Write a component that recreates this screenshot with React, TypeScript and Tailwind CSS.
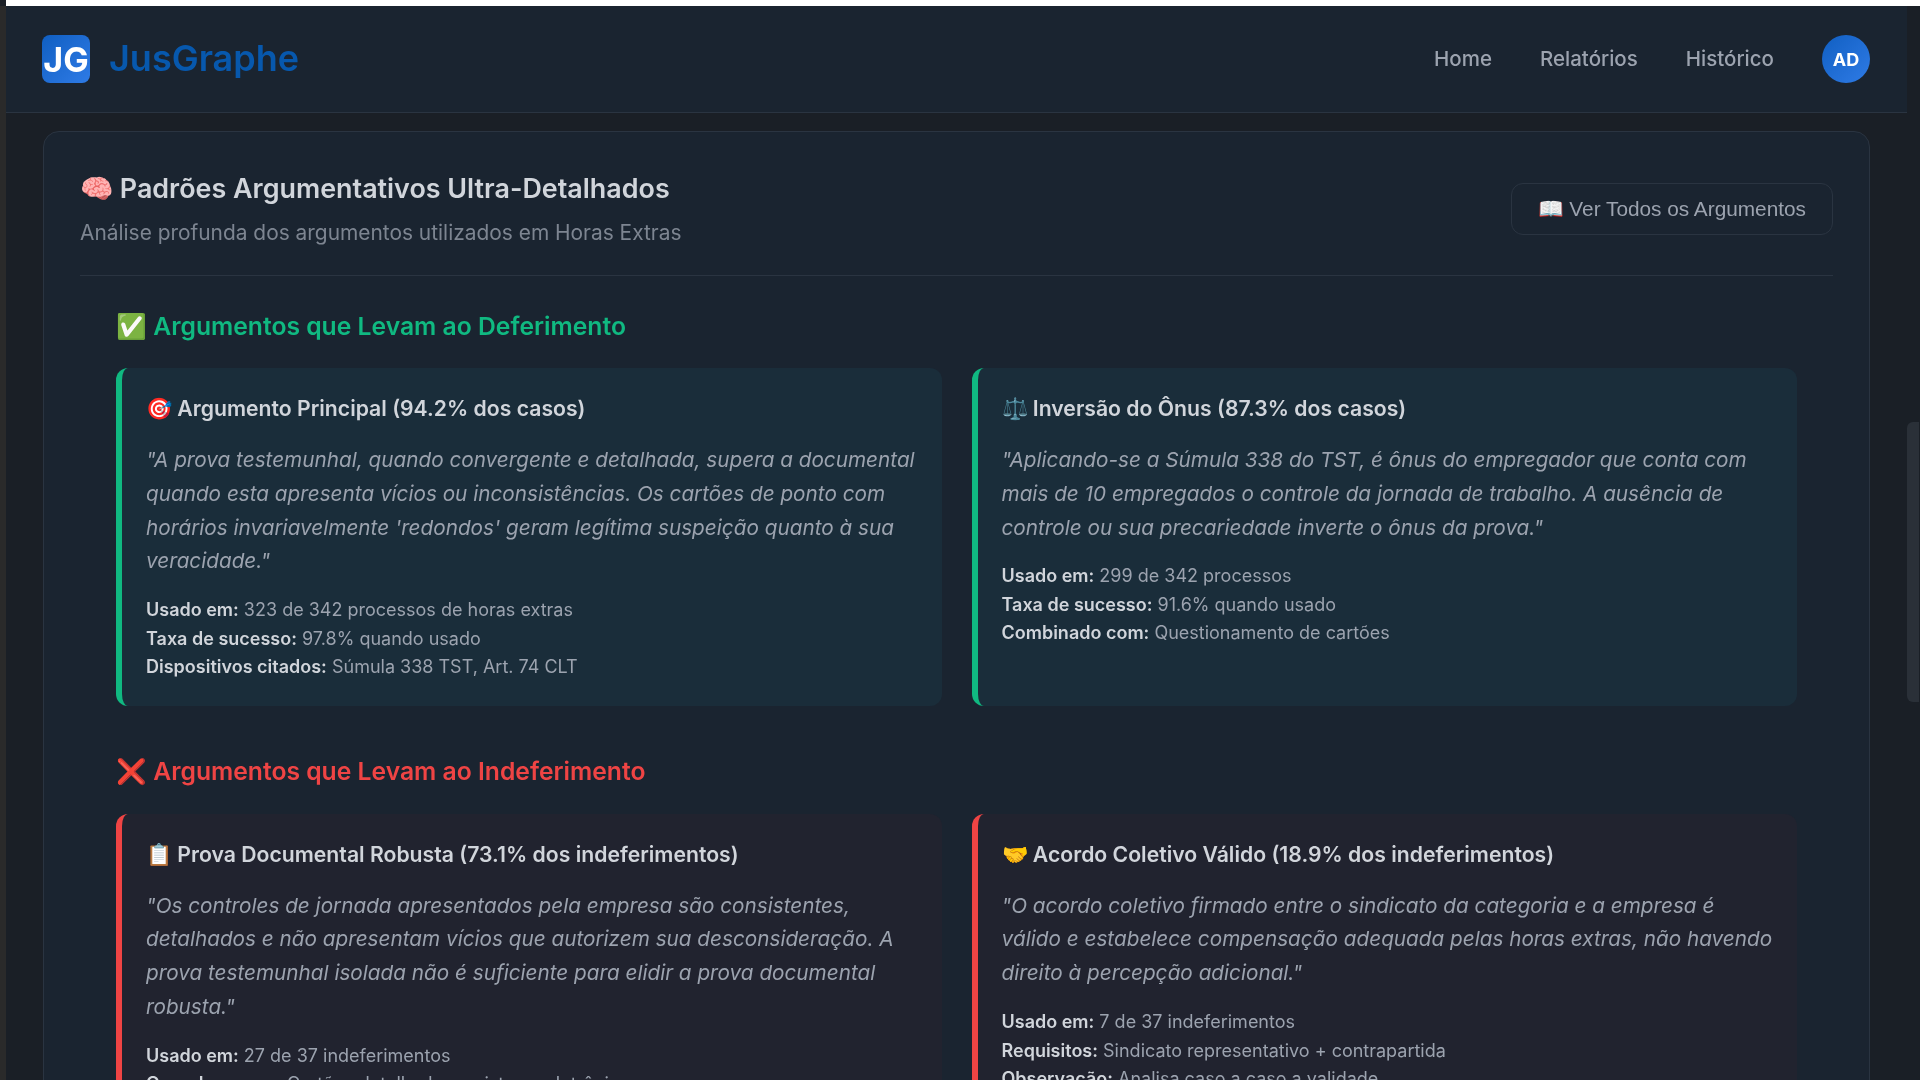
const FONT = "font-['Inter','Noto_Sans',sans-serif]";

interface ArgumentProps {
  icon: string;
  title: string;
  quote: string;
  stats: [string, string][];
  tone: "green" | "red";
}

const ArgumentCard = ({ icon, title, quote, stats, tone }: ArgumentProps) => {
  return (
    <div
      className={`rounded-xl border-l-[6px] pt-[20px] pb-[24px] pl-[24px] pr-[24px] ${
        tone === "green" ? "border-[#10b981] bg-[#1a2d3a]" : "border-[#ef4444] bg-[#21232f]"
      }`}
    >
      <h4 className="text-[21.2px] leading-[40px] font-semibold text-[#d1d5db]">
        {icon} {title}
      </h4>
      <p className="mt-[15px] text-[20.73px] leading-[33.8px] italic text-[#9ca3af]">{quote}</p>
      <div className="mt-[18px] text-[18px] leading-[28.5px] text-[#9ca3af]">
        {stats.map(([label, value]) => (
          <div key={label}>
            <strong className="font-semibold text-[#d1d5db]">{label}</strong> {value}
          </div>
        ))}
      </div>
    </div>
  );
};

export default function App() {
  return (
    <div className={`relative flex h-[1080px] flex-col overflow-hidden bg-[#1a1f26] blur-[0.6px] ${FONT}`}>
      {/* faixa branca do topo */}
      <div className="ml-[6px] h-[6px] shrink-0 bg-white" />
      <div className="flex min-h-0 flex-1">
        <div className="w-[6px] shrink-0 bg-[#2a2a2a]" />
        <div className="min-w-0 flex-1">
          <header className="flex h-[107px] items-center justify-between border-b border-[#2a3441] bg-[#1a2430] pr-[37px] pl-[36px]">
            <div className="flex items-center gap-[19px]">
              <div className="flex h-[48px] w-[48px] items-center justify-center rounded-lg bg-gradient-to-br from-[#0f5fc2] to-[#2e7be6] text-[34px] font-bold text-white">
                JG
              </div>
              <span className="pb-[2px] text-[36px] font-semibold text-[#0758ad]">JusGraphe</span>
            </div>
            <nav className="flex items-center gap-[48px] text-[20.5px] font-medium text-[#9ca3af]">
              <span>Home</span>
              <span>Relatórios</span>
              <span>Histórico</span>
              <div className="flex h-[48px] w-[48px] items-center justify-center rounded-full bg-gradient-to-br from-[#0f5fc2] to-[#2e7be6] text-[18px] font-bold text-white">
                AD
              </div>
            </nav>
          </header>
          <main className="px-[37px] pt-[18px]">
            <section className="rounded-2xl border border-[#2a3441] bg-[#1a2430] px-[36px] pt-[36px]">
              <div className="flex items-start justify-between border-b border-[#2a3441] pb-[26px]">
                <div>
                  <h2 className="text-[26.9px] leading-[40px] font-semibold text-[#d1d5db]">
                    🧠 Padrões Argumentativos Ultra-Detalhados
                  </h2>
                  <p className="mt-[9px] text-[20.9px] leading-[32px] text-[#7d8591]">
                    Análise profunda dos argumentos utilizados em Horas Extras
                  </p>
                </div>
                <button className="mt-[15px] h-[52px] rounded-xl border border-[#2a3441] px-[26px] font-['Liberation_Sans',sans-serif] text-[20.8px] text-[#9ca3af]">
                  📖 Ver Todos os Argumentos
                </button>
              </div>
              <div className="px-[36px] pt-[32px]">
                <h3 className="text-[24.7px] leading-[36px] font-semibold text-[#10b981]">
                  ✅ Argumentos que Levam ao Deferimento
                </h3>
                <div className="mt-[24px] grid grid-cols-2 gap-[30px]">
                  <ArgumentCard
                    tone="green"
                    icon="🎯"
                    title="Argumento Principal (94.2% dos casos)"
                    quote={`"A prova testemunhal, quando convergente e detalhada, supera a documental quando esta apresenta vícios ou inconsistências. Os cartões de ponto com horários invariavelmente 'redondos' geram legítima suspeição quanto à sua veracidade."`}
                    stats={[
                      ["Usado em:", "323 de 342 processos de horas extras"],
                      ["Taxa de sucesso:", "97.8% quando usado"],
                      ["Dispositivos citados:", "Súmula 338 TST, Art. 74 CLT"],
                    ]}
                  />
                  <ArgumentCard
                    tone="green"
                    icon="⚖️"
                    title="Inversão do Ônus (87.3% dos casos)"
                    quote={`"Aplicando-se a Súmula 338 do TST, é ônus do empregador que conta com mais de 10 empregados o controle da jornada de trabalho. A ausência de controle ou sua precariedade inverte o ônus da prova."`}
                    stats={[
                      ["Usado em:", "299 de 342 processos"],
                      ["Taxa de sucesso:", "91.6% quando usado"],
                      ["Combinado com:", "Questionamento de cartões"],
                    ]}
                  />
                </div>
                <h3 className="mt-[47px] text-[24.7px] leading-[36px] font-semibold text-[#ef4444]">
                  ❌ Argumentos que Levam ao Indeferimento
                </h3>
                <div className="mt-[25px] grid grid-cols-2 gap-[30px]">
                  <ArgumentCard
                    tone="red"
                    icon="📋"
                    title="Prova Documental Robusta (73.1% dos indeferimentos)"
                    quote={`"Os controles de jornada apresentados pela empresa são consistentes, detalhados e não apresentam vícios que autorizem sua desconsideração. A prova testemunhal isolada não é suficiente para elidir a prova documental robusta."`}
                    stats={[
                      ["Usado em:", "27 de 37 indeferimentos"],
                      ["Quando ocorre:", "Cartões detalhados + sistema eletrônico"],
                    ]}
                  />
                  <ArgumentCard
                    tone="red"
                    icon="🤝"
                    title="Acordo Coletivo Válido (18.9% dos indeferimentos)"
                    quote={`"O acordo coletivo firmado entre o sindicato da categoria e a empresa é válido e estabelece compensação adequada pelas horas extras, não havendo direito à percepção adicional."`}
                    stats={[
                      ["Usado em:", "7 de 37 indeferimentos"],
                      ["Requisitos:", "Sindicato representativo + contrapartida"],
                      ["Observação:", "Analisa caso a caso a validade"],
                    ]}
                  />
                </div>
              </div>
            </section>
          </main>
        </div>
        {/* trilha da barra de rolagem */}
        <div className="w-[13px] shrink-0 pt-[416px]">
          <div className="h-[280px] w-[12px] rounded-l-md bg-[#2a3038]" />
        </div>
      </div>
    </div>
  );
}
